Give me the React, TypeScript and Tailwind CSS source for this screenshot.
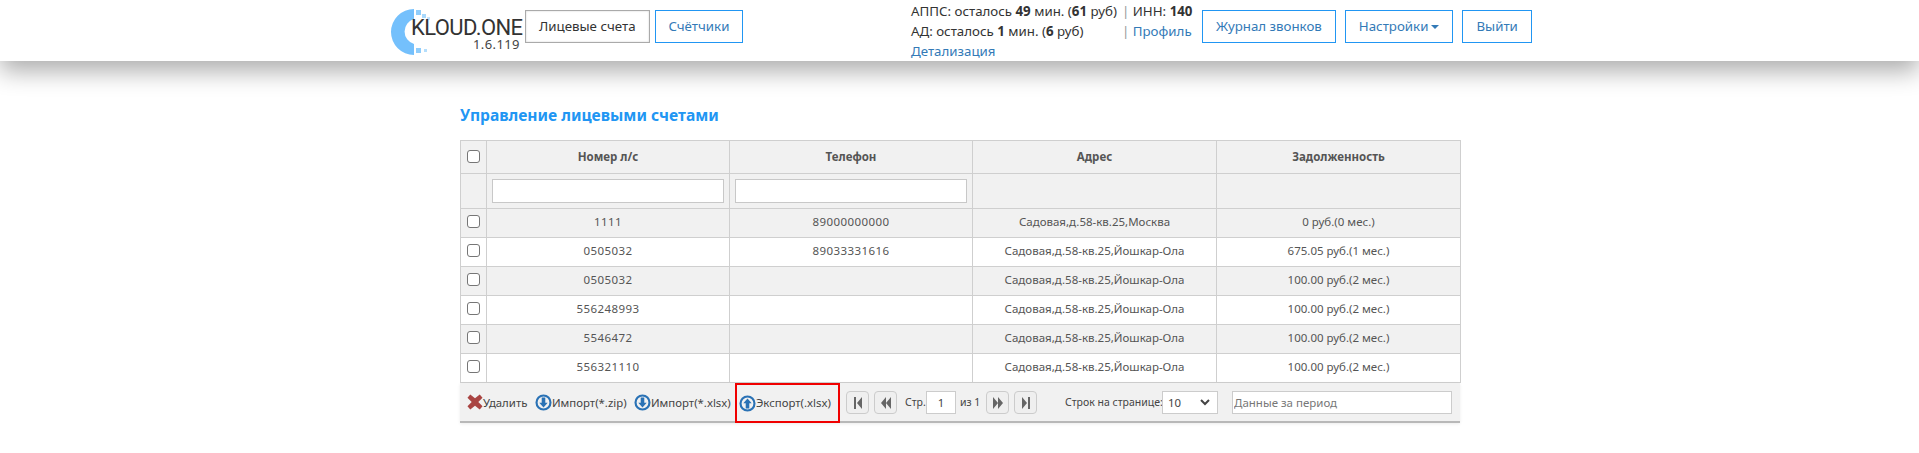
const ROWS = [
  { acc: "1111", phone: "89000000000", addr: "Садовая,д.58-кв.25,Москва", debt: "0 руб.(0 мес.)" },
  { acc: "0505032", phone: "89033331616", addr: "Садовая,д.58-кв.25,Йошкар-Ола", debt: "675.05 руб.(1 мес.)" },
  { acc: "0505032", phone: "", addr: "Садовая,д.58-кв.25,Йошкар-Ола", debt: "100.00 руб.(2 мес.)" },
  { acc: "556248993", phone: "", addr: "Садовая,д.58-кв.25,Йошкар-Ола", debt: "100.00 руб.(2 мес.)" },
  { acc: "5546472", phone: "", addr: "Садовая,д.58-кв.25,Йошкар-Ола", debt: "100.00 руб.(2 мес.)" },
  { acc: "556321110", phone: "", addr: "Садовая,д.58-кв.25,Йошкар-Ола", debt: "100.00 руб.(2 мес.)" },
];

function Check() {
  return <span className="block w-[13px] h-[13px] mx-auto border border-[#767676] rounded-[3px] bg-white" />;
}

function RoundArrow({ up }: { up?: boolean }) {
  return (
    <svg width="17" height="17" viewBox="0 0 19 19" className="shrink-0">
      <circle cx="9.5" cy="9.5" r="7.8" fill="none" stroke="#2a72b5" strokeWidth="2.4" />
      <path
        d={up ? "M9.5 3.8 L14.2 9.2 H11.5 V15 H7.5 V9.2 H4.8 Z" : "M9.5 15.2 L14.2 9.8 H11.5 V4 H7.5 V9.8 H4.8 Z"}
        fill="#2a72b5"
      />
    </svg>
  );
}

function PageBtn({ d }: { d: string }) {
  return (
    <span className="flex items-center justify-center w-[23px] h-[23px] border border-[#ccc] rounded-[4px] bg-[#efefef]">
      <svg width="12" height="14" viewBox="0 0 12 14">
        <path d={d} fill="#666" />
      </svg>
    </span>
  );
}

function Logo() {
  return (
    <div className="relative w-[131px] h-[51px] shrink-0">
      <svg width="50" height="48" viewBox="0 0 50 48" className="absolute left-0 top-[4px]">
        <path d="M24 1 A23 23 0 0 0 24 47 L24 36 A13 13 0 0 1 24 11 Z" fill="#74c0fc" />
        <rect x="26" y="2" width="5" height="5" fill="#90cdfb" />
        <rect x="32" y="6" width="4" height="4" fill="#a8d8fc" />
        <rect x="37" y="9" width="3" height="3" fill="#c4e4fd" />
        <rect x="26" y="40" width="5" height="5" fill="#90cdfb" />
        <rect x="34" y="41" width="3" height="3" fill="#b4defc" />
      </svg>
      <span className="absolute left-[21px] top-[15px] font-['Roboto',sans-serif] text-[22px] leading-[18px] tracking-[-0.6px] text-[#333]">
        KLOUD.ONE
      </span>
      <span className="absolute left-[83px] top-[34px] text-[13px] leading-[12px] tracking-[0.4px] text-[#444]">1.6.119</span>
    </div>
  );
}

function NavBtn({ children, active }: { children: React.ReactNode; active?: boolean }) {
  return (
    <button
      className={
        active
          ? "h-[33px] px-[13px] border border-[#aaa] text-[#333] shadow-[inset_0_0_2px_#ccc] whitespace-nowrap"
          : "h-[33px] px-[13px] border border-[#2196f3] text-[#337ab7] whitespace-nowrap"
      }
    >
      {children}
    </button>
  );
}

export default function App() {
  return (
    <div className="min-h-[453px] bg-white font-['Noto_Sans',sans-serif] text-[13.3px] text-[#333] overflow-hidden">
      <header className="h-[61px] bg-white shadow-[0_10px_24px_rgba(0,0,0,0.33)] relative flex items-start pl-[390px]">
        <div className="flex items-start w-[521px] pt-[10px]">
          <div className="-mt-[6px] mr-[4px]">
            <Logo />
          </div>
          <div className="flex gap-[5px]">
            <NavBtn active>Лицевые счета</NavBtn>
            <NavBtn>Счётчики</NavBtn>
          </div>
        </div>
        <div className="w-[291px] pt-[1px] leading-[20px] whitespace-nowrap">
          <div className="flex">
            <span className="w-[211px]">
              АППС: осталось <b>49</b> мин. (<b>61</b> руб)
            </span>
            <span><span className="text-[#999]">|</span> ИНН: <b>140</b></span>
          </div>
          <div className="flex">
            <span className="w-[211px]">
              АД: осталось <b>1</b> мин. (<b>6</b> руб)
            </span>
            <span className="text-[#337ab7]"><span className="text-[#999]">|</span> Профиль</span>
          </div>
          <div className="text-[#337ab7]">Детализация</div>
        </div>
        <div className="flex gap-[9px] pt-[10px]">
          <NavBtn>Журнал звонков</NavBtn>
          <NavBtn>
            <span className="flex items-center gap-[3px]">
              Настройки
              <span className="w-0 h-0 border-x-[4px] border-x-transparent border-t-[4px] border-t-[#337ab7]" />
            </span>
          </NavBtn>
          <NavBtn>Выйти</NavBtn>
        </div>
      </header>

      <main className="w-[1000px] ml-[460px]">
        <h2 className="pt-[44px] h-[79px] text-[15.6px] leading-[20px] font-bold text-[#2196f3]">Управление лицевыми счетами</h2>

        <table className="w-full table-fixed border-collapse text-[11.5px] text-[#555]">
          <colgroup>
            <col className="w-[26px]" />
            <col className="w-[243px]" />
            <col className="w-[243px]" />
            <col className="w-[244px]" />
            <col className="w-[244px]" />
          </colgroup>
          <thead className="bg-[#f1f1f1]">
            <tr className="h-[33px]">
              <th className="border border-[#cfcfcf] pb-[2px]"><Check /></th>
              {["Номер л/с", "Телефон", "Адрес", "Задолженность"].map((h) => (
                <th key={h} className="border border-[#cfcfcf] font-bold text-[#555]">{h}</th>
              ))}
            </tr>
            <tr className="h-[35px]">
              <th className="border border-[#cfcfcf]" />
              <th className="border border-[#cfcfcf] px-[5px]"><input className="block w-full h-[24px] bg-white border border-[#c8c8c8]" /></th>
              <th className="border border-[#cfcfcf] px-[5px]"><input className="block w-full h-[24px] bg-white border border-[#c8c8c8]" /></th>
              <th className="border border-[#cfcfcf]" />
              <th className="border border-[#cfcfcf]" />
            </tr>
          </thead>
          <tbody>
            {ROWS.map((r, i) => (
              <tr key={i} className={i % 2 === 0 ? "h-[29px] bg-[#f1f1f1]" : "h-[29px] bg-white"}>
                <td className="border border-[#cfcfcf] pb-[4px]"><Check /></td>
                <td className="border border-[#cfcfcf] text-center pb-[2px] tracking-[0.4px]">{r.acc}</td>
                <td className="border border-[#cfcfcf] text-center pb-[2px] tracking-[0.4px]">{r.phone}</td>
                <td className="border border-[#cfcfcf] text-center pb-[2px]">{r.addr}</td>
                <td className="border border-[#cfcfcf] text-center pb-[2px]">{r.debt}</td>
              </tr>
            ))}
          </tbody>
        </table>

        <div className="h-[40px] pt-[1px] bg-[#f1f1f1] border-b-2 border-[#b8b8b8] shadow-[0_1px_3px_rgba(0,0,0,0.08)] flex items-center pl-[7px] text-[11.4px] text-[#444]">
          <span className="flex items-center w-[68px]">
            <svg width="16" height="16" viewBox="0 0 17 17" className="shrink-0">
              <path d="M3.5 0.5 L8.5 4.5 L13.5 0.5 L16.5 4 L12 8.5 L16.5 13 L13.5 16.5 L8.5 12.5 L3.5 16.5 L0.5 13 L5 8.5 L0.5 4 Z" fill="#a94442" />
            </svg>
            Удалить
          </span>
          <span className="flex items-center w-[99px]"><RoundArrow />Импорт(*.zip)</span>
          <span className="flex items-center w-[101px]"><RoundArrow />Импорт(*.xlsx)</span>
          <span className="flex items-center self-start -mt-[1px] h-[40px] w-[105px] pl-[2px] border-[2px] border-[#f00000]"><RoundArrow up />Экспорт(.xlsx)</span>
          <span className="flex items-center ml-[6px] gap-[5px]">
            <PageBtn d="M2 1 H4 V13 H2 Z M5 7 L10 1 V13 Z" />
            <PageBtn d="M1 7 L6 1 V13 Z M6 7 L11 1 V13 Z" />
          </span>
          <span className="ml-[8px] w-[21px] text-[10.5px]">Стр.</span>
          <span className="w-[30px] h-[23px] flex items-center justify-center bg-white border border-[#ccc]">1</span>
          <span className="ml-[4px] w-[26px] text-[10.5px]">из 1</span>
          <span className="flex items-center gap-[5px]">
            <PageBtn d="M1 1 L6 7 L1 13 Z M6 1 L11 7 L6 13 Z" />
            <PageBtn d="M2 1 L7 7 L2 13 Z M8 1 H10 V13 H8 Z" />
          </span>
          <span className="ml-[28px] w-[97px] text-[10.5px] whitespace-nowrap">Строк на странице:</span>
          <span className="w-[56px] h-[23px] flex items-center justify-between pl-[5px] pr-[7px] bg-white border border-[#ccc]">
            10
            <svg width="10" height="7" viewBox="0 0 10 7"><path d="M1 1 L5 5 L9 1" fill="none" stroke="#444" strokeWidth="2" /></svg>
          </span>
          <input
            placeholder="Данные за период"
            className="ml-[14px] w-[220px] h-[23px] px-[1px] bg-white border border-[#ccc] text-[11.5px] placeholder:text-[#777]"
          />
        </div>
      </main>
    </div>
  );
}
